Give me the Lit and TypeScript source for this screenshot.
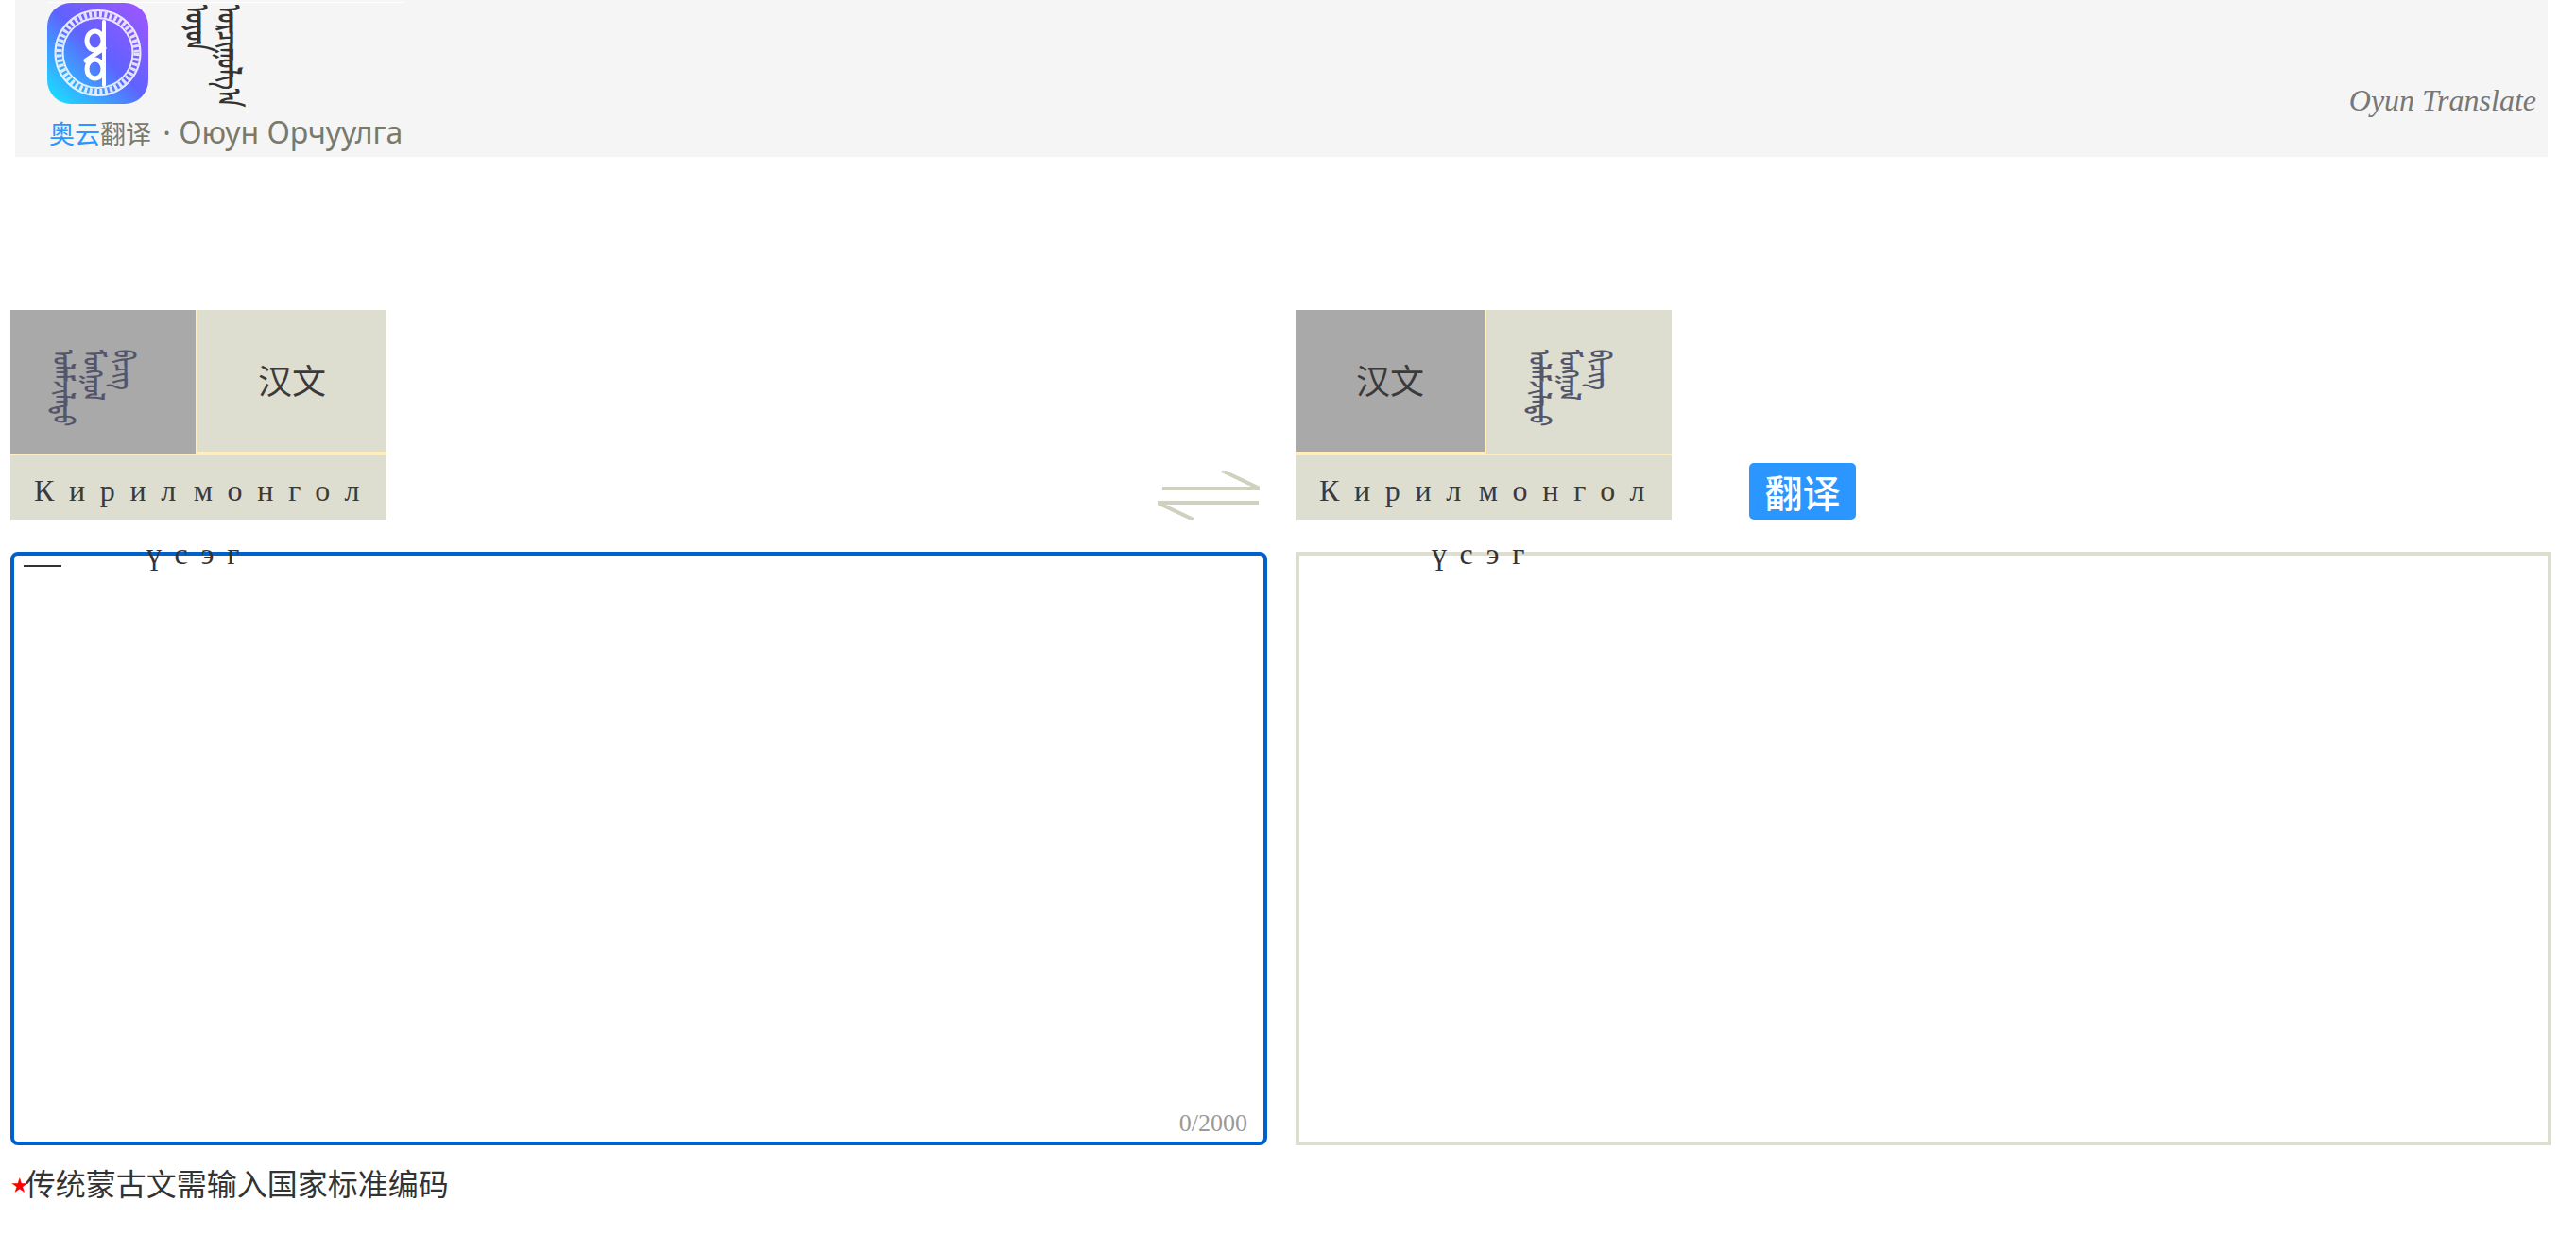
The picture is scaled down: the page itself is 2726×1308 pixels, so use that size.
import { LitElement, css, html } from "lit";
import { customElement } from "lit/decorators.js";

const TRADITIONAL = ["ᠤᠯᠠᠮᠵᠢᠯᠠᠲᠤ", "ᠮᠣᠩᠭᠣᠯ", "ᠪᠢᠴᠢᠭ"];

@customElement("app-root")
export class AppRoot extends LitElement {
  static styles = css`
    :host {
      display: block;
      font-family: "Liberation Serif", "Noto Sans CJK SC", serif;
      color: #333;
    }

    .header {
      height: 166px;
      margin: 0 30px 0 16px;
      padding-left: 34px;
      background: #f5f5f5;
      display: flex;
      justify-content: space-between;
      box-sizing: border-box;
    }

    .brand {
      width: 377px;
      margin-top: 2px;
      border-top: 1px solid #fff;
    }

    .brand-top {
      display: flex;
      height: 108px;
    }

    .brand-top svg {
      width: 107px;
      height: 107px;
      display: block;
    }

    .brand-script {
      margin: 2px 0 0 38px;
      display: flex;
      flex-direction: column;
      gap: 4px;
      writing-mode: vertical-lr;
      font: 700 34px/30px "Noto Sans", "DejaVu Sans", sans-serif;
      color: #333;
      height: 190px;
      transform: scaleY(0.6);
      transform-origin: top;
    }

    .caption {
      margin: 12px 0 0 2px;
      font: 32px/34px "Noto Sans", "Noto Sans CJK SC", sans-serif;
      color: #7a7a6c;
      white-space: nowrap;
    }

    .caption b,
    .caption i {
      font: 27px/34px "Noto Sans CJK SC", sans-serif;
    }

    .caption b {
      color: #2b96ff;
    }

    .caption i {
      margin-right: 4px;
    }

    .slogan {
      margin: 86px 12px 0 0;
      font: italic 32px/40px "Liberation Serif", serif;
      color: #777;
    }

    .main {
      display: grid;
      grid-template-columns: 1330px 1329px;
      column-gap: 30px;
      padding: 162px 0 0 11px;
    }

    .panel {
      position: relative;
    }

    .bar {
      display: flex;
      align-items: flex-end;
      height: 222px;
    }

    .lang {
      width: 398px;
      height: 222px;
      display: grid;
      grid-template-columns: 196px 200px;
      grid-template-rows: 152px 68px;
      gap: 2px;
      background: #ffeebb;
    }

    .lang.swapped {
      grid-template-columns: 200px 196px;
    }

    .tile {
      background: #deded0;
      display: flex;
      align-items: center;
      justify-content: center;
      font: 36px/1 "Noto Sans CJK SC", sans-serif;
      color: #3a3a3a;
    }

    .tile.active {
      background: #a9a9a9;
    }

    .tile.han {
      height: 150px;
      padding-bottom: 4px;
      box-sizing: border-box;
    }

    .tile.wide {
      grid-column: 1 / 3;
      padding: 6px 0 0 12px;
      box-sizing: border-box;
      font: 32px/1 "Liberation Serif", serif;
      letter-spacing: 15.7px;
      word-spacing: -21px;
      white-space: nowrap;
    }

    .script {
      writing-mode: vertical-lr;
      display: flex;
      flex-direction: column;
      gap: 6px;
      align-self: flex-start;
      height: 137px;
      margin: 42px 18px 0 0;
      font: 700 30px/26px "Noto Sans", "DejaVu Sans", sans-serif;
      color: #55556a;
      white-space: nowrap;
      transform: scaleY(0.57);
      transform-origin: top;
    }

    .swap {
      width: 108px;
      height: 52px;
      margin-left: auto;
      margin-right: 8px;
      display: block;
    }

    .translate {
      width: 113px;
      height: 60px;
      margin-left: 82px;
      border: 0;
      padding: 0;
      border-radius: 5px;
      background: #2b96ff;
      color: #fff;
      font: 500 40px/60px "Noto Sans CJK SC", sans-serif;
    }

    .box {
      position: relative;
      height: 628px;
      margin-top: 34px;
      box-sizing: border-box;
      border: 4px solid #deded0;
    }

    .box.focus {
      border-color: #0060cc;
      border-radius: 8px;
    }

    .caret {
      position: absolute;
      left: 10px;
      top: 10px;
      width: 40px;
      height: 2px;
      background: #333;
    }

    .count {
      position: absolute;
      right: 17px;
      bottom: 4px;
      font-size: 26px;
      line-height: 30px;
      color: #999;
    }

    .wrap-word {
      position: absolute;
      left: 144px;
      top: 240px;
      font-size: 32px;
      line-height: 36px;
      letter-spacing: 13.6px;
      white-space: nowrap;
    }

    .note {
      margin: 16px 0 0 11px;
      font: 32px/46px "Noto Sans CJK SC", sans-serif;
      color: #333;
    }

    .star {
      color: #f00;
      font: 22px/1 "DejaVu Sans", sans-serif;
      vertical-align: 3px;
      margin-right: -4px;
    }
  `;

  private logo() {
    return html`<svg viewBox="0 0 107 107">
      <defs>
        <linearGradient id="g" x1="0.1" y1="0.95" x2="0.95" y2="0.05">
          <stop offset="0" stop-color="#1fd6ff" />
          <stop offset="0.5" stop-color="#5f62ff" />
          <stop offset="1" stop-color="#9c57ff" />
        </linearGradient>
      </defs>
      <rect width="107" height="107" rx="25" fill="url(#g)" />
      <g fill="none" stroke="#fff">
        <circle cx="53.5" cy="53" r="45" stroke-width="2" opacity="0.85" />
        <circle cx="53.5" cy="53" r="37" stroke-width="2" opacity="0.85" />
        <circle cx="53.5" cy="53" r="41" stroke-width="6" stroke-dasharray="3 2.4" opacity="0.8" />
        <ellipse cx="50.5" cy="40" rx="8.5" ry="10" stroke-width="5" />
        <ellipse cx="50.5" cy="70" rx="8.5" ry="10" stroke-width="5" />
        <path d="M60 20V87" stroke-width="4" stroke-linecap="round" />
        <path d="M41 61 60 48" stroke-width="5" stroke-linecap="round" />
      </g>
    </svg>`;
  }

  private swapIcon() {
    return html`<svg class="swap" viewBox="0 0 108 52" fill="none" stroke="#d0d0be" stroke-width="4">
      <path d="M5 19H108L68 0" />
      <path d="M0 34H107M0 34 38 52" />
    </svg>`;
  }

  private langBox(swapped: boolean) {
    const script = html`<div class="tile ${swapped ? "" : "active"}">
      <div class="script">${TRADITIONAL.map((w) => html`<span>${w}</span>`)}</div>
    </div>`;
    const han = html`<div class="tile han ${swapped ? "active" : ""}">汉文</div>`;
    return html`<div class="lang ${swapped ? "swapped" : ""}">
      ${swapped ? han : script} ${swapped ? script : han}
      <div class="tile wide">Кирил монгол</div>
    </div>`;
  }

  render() {
    return html`
      <div class="header">
        <div class="brand">
          <div class="brand-top">
            ${this.logo()}
            <div class="brand-script"><span>ᠣᠶᠤᠨ</span><span>ᠣᠷᠴᠢᠭᠤᠯᠭ᠎ᠠ</span></div>
          </div>
          <div class="caption"><b>奥云</b><i>翻译</i> · Оюун Орчуулга</div>
        </div>
        <div class="slogan">Oyun Translate</div>
      </div>
      <div class="main">
        <div class="panel">
          <div class="bar">${this.langBox(false)} ${this.swapIcon()}</div>
          <div class="box focus">
            <div class="caret"></div>
            <div class="count">0/2000</div>
          </div>
          <div class="wrap-word">үсэг</div>
        </div>
        <div class="panel">
          <div class="bar">${this.langBox(true)}<button class="translate">翻译</button></div>
          <div class="box"></div>
          <div class="wrap-word">үсэг</div>
        </div>
      </div>
      <div class="note"><span class="star">★</span>传统蒙古文需输入国家标准编码</div>
    `;
  }
}
